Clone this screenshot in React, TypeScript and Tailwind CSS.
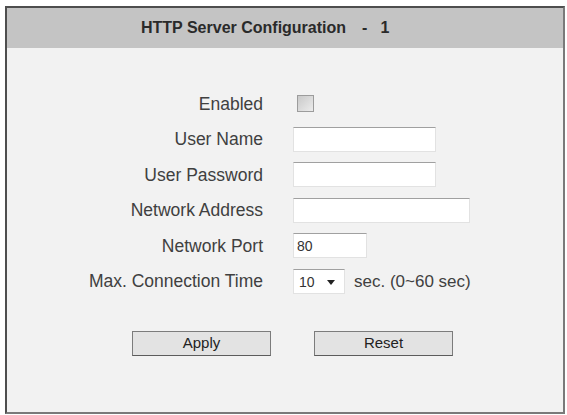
import { useState } from "react";

const labelCls =
  "flex h-[35.5px] items-center justify-end text-[17.5px] text-[#404040]";
const cellCls = "flex h-[35.5px] items-center";
const inputCls =
  "h-[25px] border border-[#e2e2e2] border-t-[#a0a0a0] bg-white px-[3px] text-[14px] text-[#333] outline-none";

export default function App() {
  const [enabled, setEnabled] = useState(false);
  const [userName, setUserName] = useState("");
  const [password, setPassword] = useState("");
  const [address, setAddress] = useState("");
  const [port, setPort] = useState("80");
  const [timeout, setTimeoutValue] = useState("10");

  return (
    <div
      className="min-h-[415px] w-[567px] bg-white pl-[5px] pt-[6px]"
      style={{ fontFamily: '"Liberation Sans", Arial, sans-serif' }}
    >
      <div className="flex h-[408px] w-[560px] flex-col border-2 border-[#4e4e4e] border-r-[#7a7a7a] border-b-[#7a7a7a] bg-[#f2f2f2]">
        {/* header */}
        <div className="flex h-[40px] shrink-0 items-center bg-[#c4c4c4] pl-[134px] text-[16px] font-bold text-[#2a2a2a]">
          <span>HTTP Server Configuration</span>
          <span className="ml-[16px]">-</span>
          <span className="ml-[13px]">1</span>
        </div>

        {/* form */}
        <div className="grid grid-cols-[256px_1fr] gap-x-[30px] pt-[38px]">
          <div className={labelCls}>Enabled</div>
          <div className={cellCls}>
            <button
              type="button"
              onClick={() => setEnabled(!enabled)}
              className="ml-[4px] flex h-[17px] w-[17px] items-center justify-center border border-[#9c9c9c] bg-gradient-to-br from-[#c9c9c9] to-[#ececec]"
            >
              {enabled && (
                <svg viewBox="0 0 12 12" className="h-[12px] w-[12px]">
                  <path
                    d="M2 6.5 L5 9 L10 3"
                    fill="none"
                    stroke="#333"
                    strokeWidth="1.8"
                  />
                </svg>
              )}
            </button>
          </div>

          <div className={labelCls}>User Name</div>
          <div className={cellCls}>
            <input
              className={`${inputCls} w-[143px]`}
              value={userName}
              onChange={(e) => setUserName(e.target.value)}
            />
          </div>

          <div className={labelCls}>User Password</div>
          <div className={cellCls}>
            <input
              type="password"
              className={`${inputCls} w-[143px]`}
              value={password}
              onChange={(e) => setPassword(e.target.value)}
            />
          </div>

          <div className={labelCls}>Network Address</div>
          <div className={cellCls}>
            <input
              className={`${inputCls} w-[177px]`}
              value={address}
              onChange={(e) => setAddress(e.target.value)}
            />
          </div>

          <div className={labelCls}>Network Port</div>
          <div className={cellCls}>
            <input
              className={`${inputCls} w-[74px]`}
              value={port}
              onChange={(e) => setPort(e.target.value)}
            />
          </div>

          <div className={labelCls}>Max. Connection Time</div>
          <div className={cellCls}>
            <div className="relative h-[25px] w-[52px] border border-[#e2e2e2] border-t-[#a0a0a0] bg-white">
              <select
                className="h-full w-full appearance-none bg-transparent pl-[5px] text-[14px] text-[#333] outline-none"
                value={timeout}
                onChange={(e) => setTimeoutValue(e.target.value)}
              >
                {["10", "20", "30", "40", "50", "60"].map((v) => (
                  <option key={v} value={v}>
                    {v}
                  </option>
                ))}
              </select>
              <svg
                viewBox="0 0 8 5"
                className="pointer-events-none absolute right-[9px] top-[10px] h-[5px] w-[8px]"
              >
                <path d="M0 0 H8 L4 5 Z" fill="#222" />
              </svg>
            </div>
            <span className="ml-[9px] text-[17px] text-[#404040]">
              sec. (0~60 sec)
            </span>
          </div>
        </div>

        {/* buttons */}
        <div className="mt-[32px] flex gap-[43px] pl-[125px]">
          <button
            type="button"
            className="h-[25px] w-[139px] border border-[#7c7c7c] border-b-[#5c5c5c] bg-[#e3e3e3] text-[15px] text-[#222]"
          >
            Apply
          </button>
          <button
            type="button"
            onClick={() => {
              setEnabled(false);
              setUserName("");
              setPassword("");
              setAddress("");
              setPort("80");
              setTimeoutValue("10");
            }}
            className="h-[25px] w-[139px] border border-[#7c7c7c] border-b-[#5c5c5c] bg-[#e3e3e3] text-[15px] text-[#222]"
          >
            Reset
          </button>
        </div>
      </div>
    </div>
  );
}
